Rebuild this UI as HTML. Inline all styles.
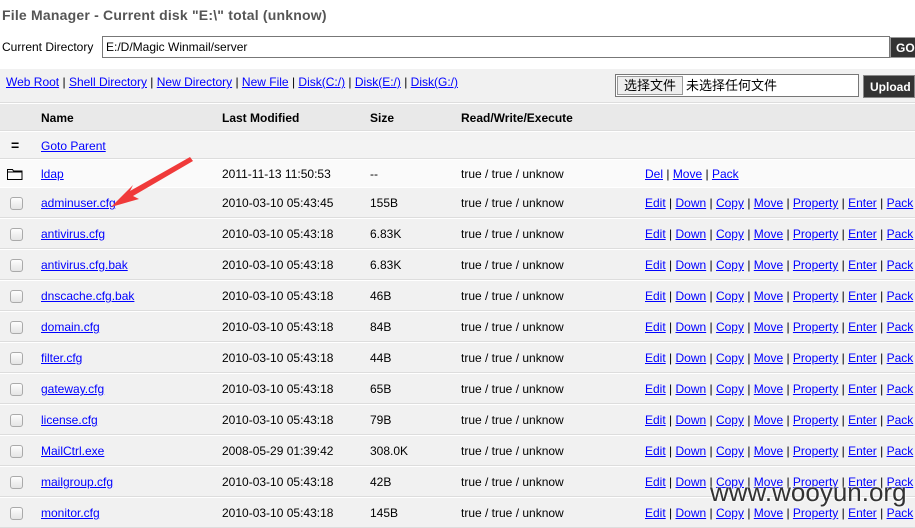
<!DOCTYPE html>
<html><head><meta charset="utf-8"><style>
*{margin:0;padding:0;box-sizing:border-box}
body{width:915px;height:521px;overflow:hidden;background:#fff;font-family:"Liberation Sans",Arial,"Noto Sans CJK SC",sans-serif;font-size:12px;color:#000;position:relative}
a{color:#00f;text-decoration:underline}
.abs{position:absolute}
.row{position:absolute;left:0;width:915px;border-bottom:1px solid #ddd;border-top:1px solid #fff}
.row span{position:absolute;white-space:nowrap}
.cb{position:absolute;left:10px;width:13px;height:13px;border:1px solid #aaa;border-radius:3px;background:linear-gradient(#fdfdfd,#e4e4e4)}
</style></head><body>
<div class="abs" style="left:2px;top:7px;font-size:14px;font-weight:bold;color:#555;letter-spacing:0.2px">File Manager - Current disk "E:\" total (unknow)</div>
<div class="abs" style="left:2px;top:40px">Current Directory</div>
<div class="abs" style="left:102px;top:36px;width:788px;height:22px;border:1px solid #777;padding:3px 3px;font-size:12px">E:/D/Magic Winmail/server</div>
<div class="abs" style="left:890px;top:37px;width:30px;height:21px;background:#333;border:1px solid #999;color:#fff;font-weight:bold;padding:3px 5px">GO</div>
<div class="abs" style="left:0;top:69px;width:915px;height:34px;background:#f1f1f1;border-bottom:1px solid #ddd"></div>
<div class="abs" style="left:6px;top:75px"><a>Web Root</a> | <a>Shell Directory</a> | <a>New Directory</a> | <a>New File</a> | <a>Disk(C:/)</a> | <a>Disk(E:/)</a> | <a>Disk(G:/)</a></div>
<div class="abs" style="left:615px;top:74px;width:244px;height:23px;border:1px solid #777;background:#fff"></div>
<div class="abs" style="left:617px;top:76px;width:66px;height:19px;border:1px solid #999;background:#eee;text-align:center;font-size:13px;line-height:17px">选择文件</div>
<div class="abs" style="left:686px;top:78px;font-size:13px;line-height:16px">未选择任何文件</div>
<div class="abs" style="left:863px;top:75px;width:52px;height:23px;background:#333;border:1px solid #888;color:#fff;font-weight:bold;padding:4px 6px">Upload</div>
<div class="abs" style="left:0;top:104px;width:915px;height:27px;background:#e9e9e9;border-bottom:1px solid #ddd;font-weight:bold">
<span class="abs" style="left:41px;top:7px">Name</span><span class="abs" style="left:222px;top:7px">Last Modified</span><span class="abs" style="left:370px;top:7px">Size</span><span class="abs" style="left:461px;top:7px">Read/Write/Execute</span></div>
<div class="row" style="top:131px;height:28px;background:#f3f3f3"><span style="left:11px;top:5px;font-weight:bold;font-size:14px">=</span><span style="left:41px;top:7px"><a>Goto Parent</a></span></div>
<div class="row" style="top:159px;height:29px;background:#fafafa">
<svg class="abs" style="left:7px;top:8px" width="16" height="12"><path d="M0.5 1.5h5l1 1.5h8.5v8.5h-14.5z M0.5 4h15" fill="none" stroke="#000"/></svg>
<span style="left:41px;top:7px"><a>ldap</a></span><span style="left:222px;top:7px">2011-11-13 11:50:53</span><span style="left:370px;top:7px">--</span><span style="left:461px;top:7px">true / true / unknow</span><span style="left:645px;top:7px"><a>Del</a> | <a>Move</a> | <a>Pack</a></span></div>
<div id="rows"></div>
<script>
var d=[["adminuser.cfg","2010-03-10 05:43:45","155B"],["antivirus.cfg","2010-03-10 05:43:18","6.83K"],["antivirus.cfg.bak","2010-03-10 05:43:18","6.83K"],["dnscache.cfg.bak","2010-03-10 05:43:18","46B"],["domain.cfg","2010-03-10 05:43:18","84B"],["filter.cfg","2010-03-10 05:43:18","44B"],["gateway.cfg","2010-03-10 05:43:18","65B"],["license.cfg","2010-03-10 05:43:18","79B"],["MailCtrl.exe","2008-05-29 01:39:42","308.0K"],["mailgroup.cfg","2010-03-10 05:43:18","42B"],["monitor.cfg","2010-03-10 05:43:18","145B"]];
var h="";d.forEach(function(r,i){var t=187+i*31;h+='<div class="row" style="top:'+t+'px;height:31px;background:#f1f1f1"><div class="cb" style="top:9px"></div><span style="left:41px;top:8px"><a>'+r[0]+'</a></span><span style="left:222px;top:8px">'+r[1]+'</span><span style="left:370px;top:8px">'+r[2]+'</span><span style="left:461px;top:8px">true / true / unknow</span><span style="left:645px;top:8px"><a>Edit</a> | <a>Down</a> | <a>Copy</a> | <a>Move</a> | <a>Property</a> | <a>Enter</a> | <a>Pack</a></span></div>';});
document.getElementById("rows").outerHTML=h;
</script>
<svg class="abs" style="left:0;top:0" width="915" height="521"><path d="M190 157 L130 191 L133 185 L111 207 L139 199 L133 196 L193 161 Z" fill="#f03a3a"/></svg>
<div class="abs" style="left:710px;top:477px;font-size:26px;color:#333;text-shadow:0 0 2px #fff,0 0 2px #fff">www.wooyun.org</div>
</body></html>
